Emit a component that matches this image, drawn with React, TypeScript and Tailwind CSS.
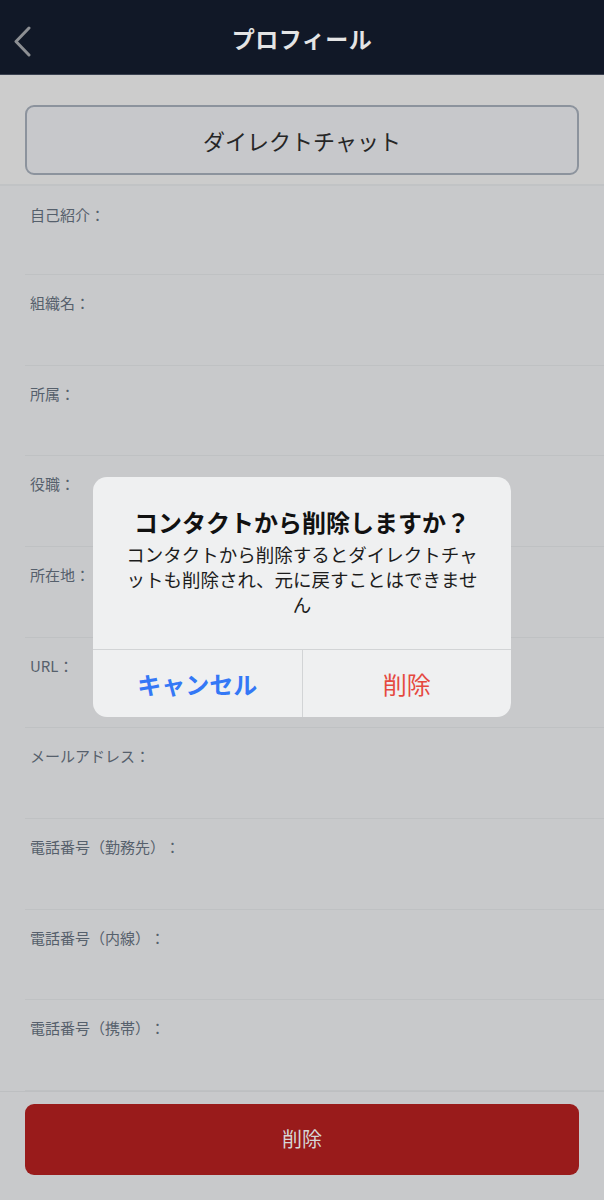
const fields = [
    '自己紹介：',
    '組織名：',
    '所属：',
    '役職：',
    '所在地：',
    'URL：',
    'メールアドレス：',
    '電話番号（勤務先）：',
    '電話番号（内線）：',
    '電話番号（携帯）：',
];

export default function App() {
    return (
        <div
            className="relative w-[604px] h-[1200px] overflow-hidden bg-[#c8c9cb] [text-spacing-trim:space-all]"
            style={{ fontFamily: '"Noto Sans CJK JP", "Noto Sans", sans-serif' }}
        >
            {/* Header */}
            <header className="relative h-[75px] bg-[#111827] border-b border-[#3a4150] flex items-center justify-center">
                <button className="absolute left-[13px] top-[26px]" aria-label="back">
                    <svg width="19" height="31" viewBox="0 0 19 31" fill="none">
                        <path d="M16 2 L3 15.5 L16 29" stroke="#8d8f93" strokeWidth="3" strokeLinecap="round" strokeLinejoin="round" />
                    </svg>
                </button>
                <h1 className="mt-[3px] text-[23px] font-bold text-[#e4e4e4] tracking-[0.5px]">プロフィール</h1>
            </header>

            {/* Direct chat */}
            <div className="h-[111px] bg-[#cccccc] border-b-2 border-[#c1c3c5] px-[25px] pt-[30px]">
                <button className="w-full h-[70px] rounded-[9px] border-2 border-[#8c939d] bg-[#c7c8cb] text-[22px] text-[#262626] flex items-center justify-center">
                    ダイレクトチャット
                </button>
            </div>

            {/* Profile fields */}
            <div className="flex flex-col">
                {fields.map((label, i) => (
                    <div
                        key={label}
                        className={`ml-[25px] border-b border-[#bfc1c3] pl-[5px] ${i === 0 ? 'h-[89px] pt-[16px]' : 'h-[90.67px] pt-[15px]'}`}
                    >
                        <span className="text-[15px] leading-[22px] text-[#56606c]">{label}</span>
                    </div>
                ))}
            </div>

            {/* Bottom action */}
            <div className="border-t border-[#bdbfc1] px-[25px] pt-[12px]">
                <button className="w-full h-[71px] rounded-[9px] bg-[#991b1b] text-[20px] text-[#d6d6d6] flex items-center justify-center">
                    削除
                </button>
            </div>

            {/* Confirm dialog */}
            <div className="absolute inset-0 flex items-center justify-center">
                <div className="w-[418px] rounded-[14px] bg-[#eff0f1] overflow-hidden mt-[-6px]">
                    <div className="pt-[30px] pb-[32px] px-[28px] text-center">
                        <h2 className="text-[24px] leading-[30px] font-bold text-[#111111]">コンタクトから削除しますか？</h2>
                        <p className="mt-[5px] text-[18.5px] leading-[25px] text-[#1c1c1c]">
                            コンタクトから削除するとダイレクトチャットも削除され、元に戻すことはできません
                        </p>
                    </div>
                    <div className="flex h-[68px] border-t border-[#d2d4d6]">
                        <button className="flex-1 flex items-center justify-center text-[24px] font-bold text-[#3478f6] border-r border-[#d2d4d6]">
                            キャンセル
                        </button>
                        <button className="flex-1 flex items-center justify-center text-[24px] text-[#e5493f]">
                            削除
                        </button>
                    </div>
                </div>
            </div>
        </div>
    );
}
